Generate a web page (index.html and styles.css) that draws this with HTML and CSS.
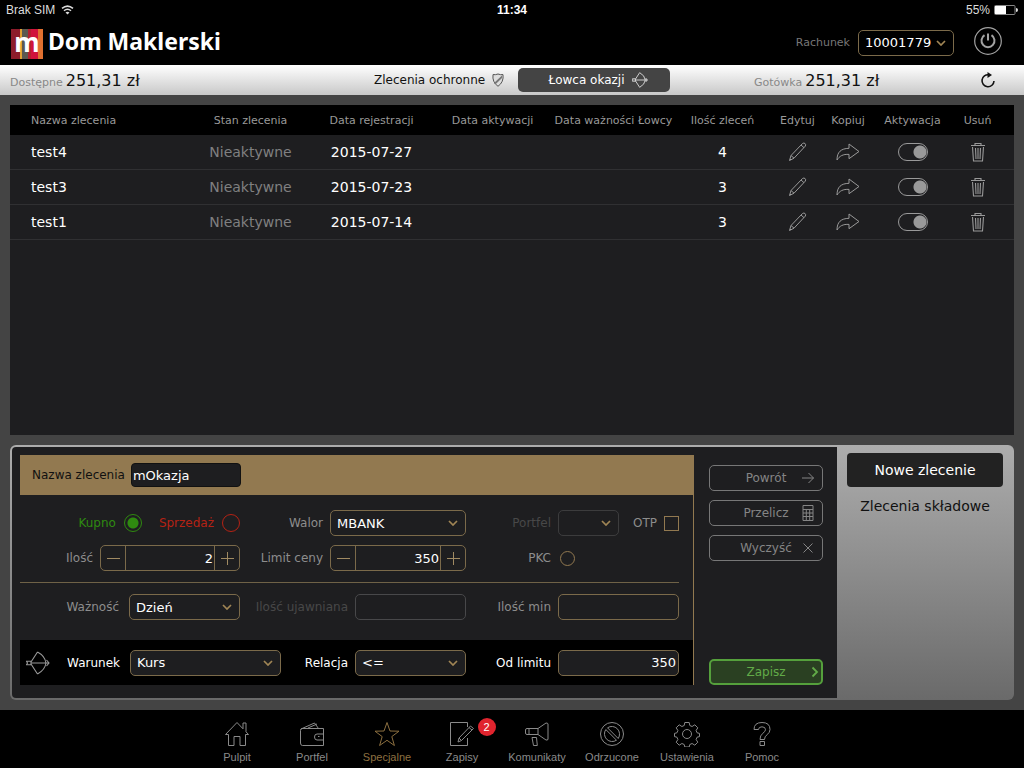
FILE: index.html
```html
<!DOCTYPE html>
<html lang="pl">
<head>
<meta charset="utf-8">
<meta name="viewport" content="width=device-width, initial-scale=1">
<title>Dom Maklerski</title>
<link rel="stylesheet" href="styles.css">
</head>
<body>
<svg class="sprite" aria-hidden="true">
  <symbol id="i-chevron" viewBox="0 0 10 6"><path d="M1 1l4 4 4-4" fill="none" stroke="currentColor" stroke-width="1.700"/></symbol>
  <symbol id="i-bow" viewBox="0 0 24 24"><g fill="none" stroke="currentColor" stroke-width="1.100"><path d="M11.500 1L5 11M5 13l6.500 10M11.500 1Q19 5 20 12q-1 7-8.500 11M5 12h18M20.500 9l2.500 3-2.500 3M.5 10.200H5v3.600H.5l1-1.800z"/></g></symbol>
  <symbol id="i-pencil" viewBox="0 0 20 20"><g fill="none" stroke="currentColor" stroke-width="1"><path d="M1.500 18.500l1.500-5L14.500 1.500q1.500-1 2.600.1t.2 2.500L6 16.200zM3 13.500l3 2.700M13 3l3 2.700M2 17l1 1"/></g></symbol>
  <symbol id="i-share" viewBox="0 0 24 18"><path d="M1 17C1 9 5 5.500 13 5.300V1l10 7.500-10 7.200v-4.300C7 11 3.500 13 1 17z" fill="none" stroke="currentColor" stroke-width="1" stroke-linejoin="round"/></symbol>
  <symbol id="i-trash" viewBox="0 0 16 20"><path d="M1 3.500h14M5 3.500v-2h6v2M2.500 5l1 14h9l1-14M5.500 6l.5 11M8 6v11M10.500 6l-.5 11" fill="none" stroke="currentColor" stroke-width="1.100"/></symbol>
  <symbol id="i-minus" viewBox="0 0 13 13"><path d="M0 6.500h13" stroke="currentColor"/></symbol>
  <symbol id="i-plus" viewBox="0 0 13 13"><path d="M0 6.500h13M6.500 0v13" stroke="currentColor"/></symbol>
</svg>

<div class="app">
  <div class="status-bar">
    <span class="status-left">Brak SIM
      <svg width="13" height="10" viewBox="0 0 13 10"><g fill="none" stroke="currentColor" stroke-width="1.500"><path d="M1 3.400q5.500-4.600 11 0M3 5.800q3.500-3 7 0"/></g><path d="M6.500 9.500L4.500 7.500q2-1.400 4 0z" fill="currentColor"/></svg>
    </span>
    <span class="status-time">11:34</span>
    <span class="status-right">55%
      <svg width="24" height="10" viewBox="0 0 24 10"><rect x=".5" y=".5" width="20.500" height="9" rx="1" fill="none" stroke="#888"/><rect x="1" y="1" width="11" height="8" fill="#fff"/><path d="M22 3q2 0 2 2t-2 2z" fill="#ddd"/></svg>
    </span>
  </div>

  <header class="header">
    <div class="brand">
      <span class="logo">m</span>
      <h1 class="brand-name">Dom Maklerski</h1>
    </div>
    <div class="account">
      <label class="account-label" for="account">Rachunek</label>
      <span class="select account-select">
        <select id="account"><option>10001779</option></select>
        <svg class="chevron"><use href="#i-chevron"/></svg>
      </span>
      <button class="icon-button power" type="button" aria-label="Wyloguj">
        <svg width="28" height="28" viewBox="0 0 28 28"><g fill="none" stroke="#a2a2a2"><circle cx="14" cy="14" r="13.300" stroke-width="1.200"/><path d="M10.500 8.200a6.500 6.500 0 1 0 7 0M14 6.500v7" stroke-width="2"/></g></svg>
      </button>
    </div>
  </header>

  <nav class="balance-bar">
    <p class="balance"><span class="balance-label">Dostępne</span><span class="balance-value">251,31 zł</span></p>
    <div class="modes">
      <button class="mode" type="button">Zlecenia ochronne
        <svg width="12" height="14" viewBox="0 0 12 14"><path d="M6 1q2.500 1 5 .6Q12 9 6 13.300 0 9 1 1.600 3.500 2 6 1z" fill="#ddd" stroke="#555"/><path d="M2 10L10 2.500v2.600L3.300 11.500z" fill="#777"/></svg>
      </button>
      <button class="mode mode-active" type="button">Łowca okazji
        <svg width="16" height="16"><use href="#i-bow"/></svg>
      </button>
    </div>
    <div class="cash">
      <p class="balance"><span class="balance-label">Gotówka</span><span class="balance-value">251,31 zł</span></p>
      <button class="icon-button" type="button" aria-label="Odśwież">
        <svg width="16" height="16" viewBox="0 0 16 16"><path d="M9 2.800A6 6 0 1 0 14 9" fill="none" stroke="#111" stroke-width="1.600"/><path d="M7.500 0v6l4.500-3z" fill="#111"/></svg>
      </button>
    </div>
  </nav>

  <main class="main">
    <section class="orders">
      <table class="orders-table">
        <colgroup><col class="c-name"><col class="c-wide"><col class="c-wide"><col class="c-wide"><col class="c-wide"><col class="c-count"><col class="c-edit"><col class="c-copy"><col class="c-toggle"><col class="c-delete"></colgroup>
        <thead>
          <tr><th>Nazwa zlecenia</th><th>Stan zlecenia</th><th>Data rejestracji</th><th>Data aktywacji</th><th>Data ważności Łowcy</th><th>Ilość zleceń</th><th>Edytuj</th><th>Kopiuj</th><th>Aktywacja</th><th>Usuń</th></tr>
        </thead>
        <tbody>
          <tr><td>test4</td><td class="muted">Nieaktywne</td><td>2015-07-27</td><td></td><td></td><td>4</td>
            <td><button class="icon-button" type="button" aria-label="Edytuj test4"><svg width="20" height="20"><use href="#i-pencil"/></svg></button></td>
            <td><button class="icon-button" type="button" aria-label="Kopiuj test4"><svg width="24" height="18"><use href="#i-share"/></svg></button></td>
            <td><input class="toggle" type="checkbox" checked aria-label="Aktywacja test4"></td>
            <td><button class="icon-button" type="button" aria-label="Usuń test4"><svg width="16" height="20"><use href="#i-trash"/></svg></button></td></tr>
          <tr><td>test3</td><td class="muted">Nieaktywne</td><td>2015-07-23</td><td></td><td></td><td>3</td>
            <td><button class="icon-button" type="button" aria-label="Edytuj test3"><svg width="20" height="20"><use href="#i-pencil"/></svg></button></td>
            <td><button class="icon-button" type="button" aria-label="Kopiuj test3"><svg width="24" height="18"><use href="#i-share"/></svg></button></td>
            <td><input class="toggle" type="checkbox" checked aria-label="Aktywacja test3"></td>
            <td><button class="icon-button" type="button" aria-label="Usuń test3"><svg width="16" height="20"><use href="#i-trash"/></svg></button></td></tr>
          <tr><td>test1</td><td class="muted">Nieaktywne</td><td>2015-07-14</td><td></td><td></td><td>3</td>
            <td><button class="icon-button" type="button" aria-label="Edytuj test1"><svg width="20" height="20"><use href="#i-pencil"/></svg></button></td>
            <td><button class="icon-button" type="button" aria-label="Kopiuj test1"><svg width="24" height="18"><use href="#i-share"/></svg></button></td>
            <td><input class="toggle" type="checkbox" checked aria-label="Aktywacja test1"></td>
            <td><button class="icon-button" type="button" aria-label="Usuń test1"><svg width="16" height="20"><use href="#i-trash"/></svg></button></td></tr>
        </tbody>
      </table>
    </section>

    <section class="editor">
      <form class="editor-body">
        <div class="order-card">
          <div class="card-title">
            <label for="name">Nazwa zlecenia</label>
            <input class="name-input" id="name" type="text" value="mOkazja">
          </div>
          <div class="card-fields">
            <div class="row">
              <div class="cell sides">
                <label class="side buy">Kupno <input class="radio" type="radio" name="side" checked></label>
                <label class="side sell">Sprzedaż <input class="radio" type="radio" name="side"></label>
              </div>
              <div class="cell">
                <label for="stock">Walor</label>
                <span class="select w-l"><select id="stock"><option>MBANK</option></select><svg class="chevron"><use href="#i-chevron"/></svg></span>
              </div>
              <div class="cell">
                <label class="dim" for="wallet">Portfel</label>
                <div class="control-group w-m">
                  <span class="select select-off"><select id="wallet" disabled><option></option></select><svg class="chevron"><use href="#i-chevron"/></svg></span>
                  <label class="check-label">OTP <input class="check" type="checkbox"></label>
                </div>
              </div>
            </div>
            <div class="row">
              <div class="cell">
                <label for="qty">Ilość</label>
                <span class="stepper w-xl">
                  <button type="button" aria-label="Zmniejsz ilość"><svg width="13" height="13"><use href="#i-minus"/></svg></button>
                  <input id="qty" type="text" value="2">
                  <button type="button" aria-label="Zwiększ ilość"><svg width="13" height="13"><use href="#i-plus"/></svg></button>
                </span>
              </div>
              <div class="cell">
                <label for="limit">Limit ceny</label>
                <span class="stepper w-l">
                  <button type="button" aria-label="Zmniejsz limit"><svg width="13" height="13"><use href="#i-minus"/></svg></button>
                  <input id="limit" type="text" value="350">
                  <button type="button" aria-label="Zwiększ limit"><svg width="13" height="13"><use href="#i-plus"/></svg></button>
                </span>
              </div>
              <div class="cell">
                <label for="pkc">PKC</label>
                <div class="control-group w-m"><input class="radio pkc" id="pkc" type="radio"></div>
              </div>
            </div>
            <hr class="divider">
            <div class="row">
              <div class="cell cell-wide">
                <label for="validity">Ważność</label>
                <span class="select w-s"><select id="validity"><option>Dzień</option></select><svg class="chevron"><use href="#i-chevron"/></svg></span>
              </div>
              <div class="cell">
                <label class="dim" for="shown">Ilość ujawniana</label>
                <input class="field field-off w-s" id="shown" type="text" disabled>
              </div>
              <div class="cell">
                <label for="min">Ilość min</label>
                <input class="field w-m" id="min" type="text">
              </div>
            </div>
          </div>
          <div class="condition">
            <svg class="condition-icon" width="24" height="24"><use href="#i-bow"/></svg>
            <div class="row condition-row">
              <div class="cell cell-wide">
                <label for="cond">Warunek</label>
                <span class="select w-xxl"><select id="cond"><option>Kurs</option></select><svg class="chevron"><use href="#i-chevron"/></svg></span>
              </div>
              <div class="cell">
                <label for="rel">Relacja</label>
                <span class="select w-s"><select id="rel"><option>&lt;=</option></select><svg class="chevron"><use href="#i-chevron"/></svg></span>
              </div>
              <div class="cell">
                <label for="from">Od limitu</label>
                <input class="field w-m" id="from" type="text" value="350">
              </div>
            </div>
          </div>
        </div>
        <div class="actions">
          <button class="action" type="button"><span>Powrót</span><svg width="12" height="12" viewBox="0 0 12 12"><path d="M0 6h11.500M6.500 1l5 5-5 5" fill="none" stroke="currentColor"/></svg></button>
          <button class="action" type="button"><span>Przelicz</span><svg width="12" height="16" viewBox="0 0 12 16"><path d="M1 .5h10v15H1zM1 4.500h10M1 8h10M1 11.500h10M4.300 4.500v11M7.700 4.500v11" fill="none" stroke="currentColor"/></svg></button>
          <button class="action" type="button"><span>Wyczyść</span><svg width="12" height="12" viewBox="0 0 12 12"><path d="M1.500 1.500l9 9M10.500 1.500l-9 9" fill="none" stroke="currentColor"/></svg></button>
          <button class="action action-save" type="submit"><span>Zapisz</span><svg width="8" height="12" viewBox="0 0 8 12"><path d="M1.500 1.500L6 6l-4.500 4.500" fill="none" stroke="currentColor" stroke-width="1.800"/></svg></button>
        </div>
      </form>
      <aside class="editor-side">
        <button class="side-tab side-tab-active" type="button">Nowe zlecenie</button>
        <button class="side-tab" type="button">Zlecenia składowe</button>
      </aside>
    </section>
  </main>

  <nav class="tab-bar">
    <a class="tab" href="#"><svg width="26" height="26" viewBox="0 0 26 26"><path d="M1.500 13.500L13 1.500l6 6.300V2h3v8.800l2.500 2.700h-3V24.500h-5.500v-9h-6v9H4.500v-11z"/></svg>Pulpit</a>
    <a class="tab" href="#"><svg width="26" height="26" viewBox="0 0 26 26"><path d="M24.500 13V7.500H3q-1.500 0-1.500 2V22q0 2.500 2 2.500h21V19M2 8L15.500 2l4 5.500M9 7l9-4M24.500 13H18q-2.500 0-2.500 3t2.500 3h6.500zM19 15.500h1.500"/></svg>Portfel</a>
    <a class="tab tab-active" href="#"><svg width="26" height="26" viewBox="0 0 26 26"><path d="M13 1.500l3 8.500 9 .2-7.200 5.400 2.600 8.900-7.400-5.200-7.400 5.200 2.600-8.900L1 10.200l9-.2z"/></svg>Specjalne</a>
    <a class="tab" href="#"><svg width="26" height="26" viewBox="0 0 26 26"><path d="M18.500 6V1.500h-17v23h17V17M9 21l1-4L21.500 5l3 2.500L12.500 19.500zM10 17l2.500 2.500M20 6.500L23 9"/></svg><span class="badge">2</span>Zapisy</a>
    <a class="tab" href="#"><svg width="26" height="26" viewBox="0 0 26 26"><path d="M3 7.500h11l8-5.500q2 0 2 1v15q0 1.500-2 1l-8-5.500H3q-1.500 0-1.500-1.500V9q0-1.500 1.500-1.500zM5 7.500v6M14 7.500v6M8 16.500h4.500l.8 8H9.500z"/></svg>Komunikaty</a>
    <a class="tab" href="#"><svg width="26" height="26" viewBox="0 0 26 26"><circle cx="13" cy="13" r="11.500"/><path d="M8.500 6.800A7.700 7.700 0 0 1 19.200 17.500zM6.800 8.500A7.700 7.700 0 0 0 17.500 19.200z"/></svg>Odrzucone</a>
    <a class="tab" href="#"><svg width="26" height="26" viewBox="0 0 26 26"><circle cx="13" cy="13" r="4.500"/><path d="M10.800 1.500h4.400l.6 3 2.300 1 2.700-1.700 3 3-1.700 2.700 1 2.300 2.400.6v3.200l-2.400.6-1 2.300 1.700 2.700-3 3-2.700-1.700-2.300 1-.6 2.500h-4.400l-.6-2.500-2.300-1-2.700 1.700-3-3 1.700-2.700-1-2.300-2.400-.6v-3.200l2.400-.6 1-2.300L2.200 6.800l3-3 2.700 1.700 2.300-1z"/></svg>Ustawienia</a>
    <a class="tab" href="#"><svg width="26" height="26" viewBox="0 0 26 26"><path d="M5 8.500Q5 1.500 13 1.500t8 7q0 3-3 5.300-2.500 1.700-2.500 4.700h-4.500q0-4 2.800-6.200 2.700-1.900 2.700-3.600 0-2.900-3.500-2.900T9.500 8.500zM11 20.500h4.500v4H11z"/></svg>Pomoc</a>
  </nav>
</div>
</body>
</html>
```
FILE: styles.css
```css
:root {
  --gold: #927950;
  --line: #7b6a4a;
  --panel: #1e1e20;
  --grey: #8d8d8d;
}

* { box-sizing: border-box; }

body {
  margin: 0;
  background: #000;
  color: #fff;
  font-family: "DejaVu Sans", Verdana, sans-serif;
  font-size: 12px;
}

button, input, select { font: inherit; color: inherit; }
button { padding: 0; border: 0; background: none; cursor: pointer; }
svg { flex: none; }
h1, p { margin: 0; }

.sprite { position: absolute; width: 0; height: 0; }

.app { display: flex; flex-direction: column; min-height: 100vh; }

/* Status bar */
.status-bar {
  display: grid;
  grid-template-columns: 1fr auto 1fr;
  align-items: center;
  height: 20px;
  padding: 0 6px;
  color: #ddd;
  font: 12px "Liberation Sans", Arial, sans-serif;
}
.status-left, .status-right { display: flex; align-items: center; gap: 6px; }
.status-right { justify-content: flex-end; gap: 4px; }
.status-time { color: #fff; font-weight: bold; }

/* Header */
.header {
  display: flex;
  align-items: center;
  justify-content: space-between;
  height: 45px;
  padding: 0 22px 0 11px;
}
.brand { display: flex; align-items: center; gap: 5px; padding-top: 2px; }
.logo {
  width: 32px;
  height: 30px;
  background: linear-gradient(90deg, #8d1c2b 0 9px, #e0a030 9px 11px, #5c5a50 11px 17px, #b3202e 17px 20px, #d0143c 20px 27px, #e07030 27px 32px);
  font: bold 26px/26px "Noto Sans", sans-serif;
  text-align: center;
}
.brand-name { padding-bottom: 6px; font: bold 23px/28px "Noto Sans", sans-serif; }
.account { display: flex; align-items: center; }
.account-label { margin-right: 8px; color: #777; font-size: 11px; }
.account-select { width: 96px; margin-right: 20px; }
.icon-button { display: inline-flex; color: #999; vertical-align: middle; }
.power { margin-bottom: 4px; }

/* Balance bar */
.balance-bar {
  display: grid;
  grid-template-columns: 364fr 296px 344fr;
  align-items: center;
  height: 30px;
  padding: 0 10px;
  background: linear-gradient(#fff, #c8c8c8);
  color: #111;
}
.balance { display: flex; align-items: baseline; gap: 3px; white-space: nowrap; }
.balance-label { color: #888; font-size: 11px; }
.balance-value { font-size: 16px; }
.modes { display: grid; grid-template-columns: 144px 152px; align-items: center; }
.mode { display: flex; align-items: center; gap: 7px; height: 24px; white-space: nowrap; }
.mode-active { justify-content: center; padding-left: 8px; border-radius: 5px; background: #444; color: #fff; }
.cash { display: flex; align-items: center; justify-content: space-between; padding: 0 18px 0 84px; }

/* Main */
.main {
  display: flex;
  flex: 1;
  flex-direction: column;
  gap: 10px;
  padding: 10px;
  background: #444;
}
.orders { flex: 1; background: #1e1e20; }
.orders-table { width: 100%; table-layout: fixed; border-spacing: 0; font-size: 14px; text-align: center; }
.orders-table th, .orders-table td { height: 35px; padding: 0; white-space: nowrap; }
.orders-table th { height: 30px; background: #000; color: #999; font-size: 11px; font-weight: normal; }
.orders-table td { border-bottom: 1px solid #303032; }
.orders-table th:first-child, .orders-table td:first-child { padding-left: 21px; text-align: left; }
.orders-table th:last-child, .orders-table td:last-child { padding-right: 12px; }
.orders-table .muted { color: #808080; }
.c-name { width: 180px; }
.c-wide { width: 121px; }
.c-count { width: 97px; }
.c-edit { width: 53px; }
.c-copy { width: 48px; }
.c-toggle { width: 81px; }
.c-delete { width: 61px; }

.toggle {
  width: 30px;
  height: 18px;
  margin: 0;
  appearance: none;
  border: 1px solid #999;
  border-radius: 9px;
  background: radial-gradient(circle at 21px 8px, #999 6px, transparent 7px);
  vertical-align: middle;
}

/* Order editor */
.editor {
  display: grid;
  grid-template-columns: 1fr 177px;
  border-radius: 6px;
  background: linear-gradient(#adadad, #6a6a6a);
}
.editor-body {
  display: flex;
  gap: 15px;
  margin: 2px 0 2px 2px;
  padding: 8px 14px 13px 8px;
  border-radius: 4px 0 0 4px;
  background: var(--panel);
}
.order-card { flex: 1; border-right: 1px solid var(--gold); }
.card-title {
  display: flex;
  align-items: center;
  gap: 6px;
  height: 40px;
  padding-left: 12px;
  background: var(--gold);
  color: #111;
}
.name-input {
  width: 110px;
  height: 24px;
  padding: 0 1px;
  border: 1px solid #111;
  border-radius: 4px;
  background: var(--panel);
  color: #fff;
  font-size: 13px;
}
.card-fields { display: flex; flex-direction: column; gap: 9px; padding: 15px 14px 20px 0; color: var(--grey); }
.row { display: grid; grid-template-columns: 220fr 226fr 213fr; align-items: center; flex: 1; }
.cell { display: flex; align-items: center; justify-content: flex-end; gap: 7px; white-space: nowrap; }
.cell-wide { gap: 10px; }
.dim { color: #484848; }
.sides { gap: 17px; }
.side { display: flex; align-items: center; gap: 8px; }
.buy { color: #2f8a10; }
.sell { color: #b52214; }
.divider { width: 100%; height: 1px; margin: 2px 0; border: 0; background: #6f6247; }

.w-s { width: 111px; }
.w-m { width: 121px; }
.w-l { width: 136px; }
.w-xl { width: 140px; }
.w-xxl { width: 151px; }
.control-group { display: flex; align-items: center; justify-content: space-between; }

.select { display: inline-grid; align-items: center; }
.select select {
  grid-area: 1 / 1;
  width: 100%;
  height: 26px;
  padding: 0 6px;
  appearance: none;
  border: 1px solid var(--line);
  border-radius: 5px;
  background: transparent;
  color: #fff;
  font-size: 13px;
}
.chevron {
  grid-area: 1 / 1;
  justify-self: end;
  width: 10px;
  height: 6px;
  margin-right: 8px;
  color: #a08555;
  pointer-events: none;
}
.select-off { width: 61px; }
.select-off select { border-color: #48484a; }

.field {
  height: 26px;
  padding: 0 2px;
  border: 1px solid var(--line);
  border-radius: 5px;
  background: transparent;
  color: #fff;
  font-size: 13px;
  text-align: right;
}
.field-off { border-color: #48484a; }

.stepper {
  display: grid;
  grid-template-columns: 24px 1fr 24px;
  height: 26px;
  border: 1px solid var(--line);
  border-radius: 5px;
}
.stepper button { display: grid; place-items: center; color: #a08a62; }
.stepper input {
  min-width: 0;
  padding: 0 1px;
  border: solid var(--line);
  border-width: 0 1px;
  background: transparent;
  color: #fff;
  font-size: 13px;
  text-align: right;
}

.radio {
  width: 18px;
  height: 18px;
  margin: 0;
  appearance: none;
  border: 1px solid currentColor;
  border-radius: 50%;
}
.buy .radio:checked { background: radial-gradient(circle, currentColor 5px, transparent 6px); }
.pkc { width: 15px; height: 15px; margin-left: 2px; border-color: var(--gold); }
.check-label { display: flex; align-items: center; gap: 7px; }
.check { width: 15px; height: 15px; margin: 0; appearance: none; border: 1px solid var(--gold); }

.condition { display: flex; align-items: center; height: 45px; padding: 0 14px 0 6px; background: #000; }
.condition-icon { color: #999; }
.condition-row { grid-template-columns: 231fr 185fr 213fr; }
.condition .select select, .condition .field { background: var(--panel); }

.actions { display: flex; flex-direction: column; gap: 9px; width: 114px; padding-top: 10px; }
.action {
  display: grid;
  grid-template-columns: 1fr 12px;
  align-items: center;
  justify-items: center;
  height: 26px;
  padding: 0 8px 0 20px;
  border: 1px solid #777;
  border-radius: 5px;
  color: #858585;
}
.action-save { margin-top: auto; padding: 0 0 0 12px; border: 2px solid #55a03c; background: #2a4022; color: #62ab48; }

.editor-side { display: flex; flex-direction: column; gap: 2px; padding: 8px 11px 8px 10px; }
.side-tab { height: 34px; border-radius: 4px; color: #111; font-size: 14px; }
.side-tab-active { background: #222; color: #fff; }

/* Tab bar */
.tab-bar {
  display: flex;
  justify-content: center;
  height: 58px;
  padding: 11px 25px 0 0;
  font: 11px/14px "Liberation Sans", Arial, sans-serif;
}
.tab {
  position: relative;
  display: flex;
  flex-direction: column;
  align-items: center;
  gap: 3px;
  width: 75px;
  color: #8a8a8a;
  text-decoration: none;
}
.tab svg { fill: none; stroke: currentColor; }
.tab-active { color: #8d7040; }
.badge {
  position: absolute;
  top: -3px;
  right: 4px;
  width: 18px;
  height: 18px;
  border-radius: 50%;
  background: #e0242e;
  color: #fff;
  line-height: 18px;
  text-align: center;
}
```
